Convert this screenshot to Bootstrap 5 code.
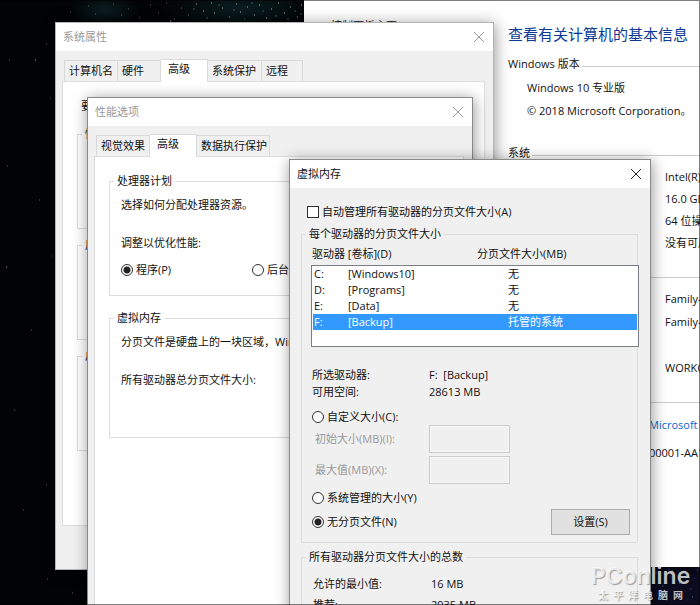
<!DOCTYPE html>
<html lang="zh-CN">
<head>
<meta charset="utf-8">
<meta name="viewport" content="width=device-width, initial-scale=1">
<title>虚拟内存</title>
<link href="https://cdn.jsdelivr.net/npm/bootstrap@5.3.0/dist/css/bootstrap.min.css" rel="stylesheet">
<style>
  body { font: 11px/16px "Open Sans", "Noto Sans CJK SC", sans-serif; color: #111; background: #000; }
  p { margin: 0; }
  .desktop { height: 100vh; background: #020304; }
  .desktop::after { content: ""; position: absolute; inset: 0; border: 1px solid rgba(0,0,0,.5); border-left: 0; pointer-events: none; z-index: 9; }
  .stars { position: absolute; inset: 0; }

  .win { position: absolute; background: #f0f0f0; border: 1px solid #8a8a8a; box-shadow: 1px 2px 14px rgba(0,0,0,.42); white-space: nowrap; }
  .win-info { left: 304px; right: 0; top: 0; background: #fff; border: 0; overflow: hidden; padding: 24px 0 106px 204px; }
  .win-props { left: 55px; top: 22px; width: 439px; padding-bottom: 43px; border-color: #b4b4b4; }
  .win-perf { left: 87px; top: 97px; width: 386px; }
  .win-vm { left: 289px; top: 159px; width: 362px; }
  .title-row { height: 28px; background: #fff; padding: 0 8px 0 7px; color: #999; }
  .win-vm .title-row { color: #111; }
  .close-x { border: 0; background: none; padding: 0; width: 12px; height: 12px; color: inherit; line-height: 0; }
  .win-vm .close-x { color: #222; }

  .tab-row { padding: 8px 8px 0; }
  .tab-btn { border: 1px solid #d9d9d9; border-bottom: 0; border-left-width: 0; background: #f0f0f0; height: 21px; padding: 0 0 0 4px; text-align: left; color: #111; }
  .tab-btn:first-child { border-left-width: 1px; }
  .tab-btn.current { background: #fff; height: 23px; padding: 0 0 4px 7px; margin-bottom: -1px; position: relative; }
  .w-41 { width: 41px; } .w-43 { width: 43px; } .w-47 { width: 47px; } .w-54 { width: 54px; } .w-73 { width: 73px; }
  .pane { background: #fff; border: 1px solid #dcdcdc; margin: 0 8px 0 6px; padding: 16px 14px 0; overflow: hidden; }
  .win-props .pane { height: 445px; }
  .win-perf .pane { min-height: 480px; }

  .group { border: 1px solid #dcdcdc; }
  .group legend { float: none; width: auto; font-size: 11px; line-height: 16px; margin: 0 0 0 4px; padding: 0 3px; }
  .win-props .group { height: 103px; margin-bottom: 8px; }
  .win-perf .group { padding-bottom: 17px; margin-bottom: 14px; }
  .group-in { padding: 8px 0 0 11px; }
  .group-in p { margin-bottom: 22px; }
  .group-in p.tight { margin-bottom: 11px; }
  .tall-in { padding-bottom: 10px; }
  .vm-in { padding: 4px 0 0 9px; }

  .tick { appearance: none; width: 12px; height: 12px; margin: 0; border: 1px solid #333; background: #fff; flex: none; }
  .tick[type=radio] { border-radius: 50%; }
  .tick[type=radio]:checked { background: radial-gradient(circle, #222 0 3px, #fff 4px); }
  .opt { gap: 3px; }
  .opt-wide { width: 131px; }

  .vm-body { padding: 16px 12px 0 11px; }
  .vm-body .group { margin-bottom: 6px; }
  .auto-opt { padding-left: 6px; margin-bottom: 6px; }
  .list-head { padding: 0 0 3px 1px; }
  .list-head span:first-child { width: 165px; }
  .drive-list { border: 1px solid #7a7f87; background: #fff; height: 82px; padding: 0 1px; margin-right: -2px; }
  .drive-list table { width: 100%; table-layout: fixed; }
  .drive-list td { padding: 0 0 0 1px; height: 16px; line-height: 16px; }
  .drive-list tr.chosen { background: #3399ff; color: #fff; }
  .col-id { width: 34px; } .col-name { width: 160px; }
  .facts { line-height: 17px; padding: 19px 0 9px 1px; }
  .facts dt { width: 117px; font-weight: 400; }
  .facts dd, .totals dd { margin: 0; }
  .totals { padding: 11px 0 24px 11px; row-gap: 5px; }
  .totals dt { width: 118px; font-weight: 400; }
  .size-row { margin-bottom: 3px; color: #999; padding-left: 4px; }
  .size-row label { width: 114px; }
  .size-box { width: 81px; height: 28px; border: 1px solid #ccc; background: #f0f0f0; box-shadow: inset 0 0 0 1px #f7f7f7; }
  .push { width: 79px; height: 26px; border: 1px solid #adadad; background: #e1e1e1; padding: 0; color: #111; margin-right: 7px; }
  .managed { margin-top: 6px; }
  .last-row { padding: 3px 0 7px; }
  .vm-in > .opt, .last-row .opt { padding-left: 1px; }

  .info-title { font-size: 15px; line-height: 20px; color: #0a3a96; margin: 0 0 12px; font-weight: 400; }
  .side-link { position: absolute; left: 27px; top: 18px; color: #111; text-decoration: none; }
  .rule-head::after { content: ""; flex: 1; height: 1px; background: #ccc; margin: 4px 0 0 2px; }
  .info-lines { display: grid; padding: 8px 0 26px; row-gap: 7px; }
  .edition { padding-left: 19px; }
  .specs { padding-left: 157px; row-gap: 6px; }
  .names { padding: 13px 0 26px 157px; }
  .names p:last-child { margin-top: 23px; }
  .license { padding: 14px 0 0 141px; row-gap: 12px; }
  .license a { color: #0a66cc; text-decoration: none; }
  .thin { height: 1px; background: #ccc; }

  .logo-mark { position: absolute; right: 9px; bottom: 4px; width: 101px; color: rgba(255,255,255,.75); text-shadow: 1px 1px 1px rgba(0,0,0,.35); z-index: 5; }
  .logo-big { font: 600 23px/26px "Inter", sans-serif; text-align: center; }
  .logo-sub { font-size: 10px; line-height: 12px; padding: 0 8px; font-weight: 700; }
</style>
<script src="https://cdn.jsdelivr.net/npm/bootstrap@5.3.0/dist/js/bootstrap.bundle.min.js"></script>
</head>
<body>
<main class="desktop position-relative overflow-hidden">
  <svg class="stars w-100 h-100" aria-hidden="true" fill="none">
    <defs><radialGradient id="haze"><stop offset="0" stop-color="#0d2a2e" stop-opacity=".7"/><stop offset="1" stop-color="#0d2a2e" stop-opacity="0"/></radialGradient></defs>
    <ellipse cx="105" cy="10" rx="36" ry="16" fill="url(#haze)"/>
    <ellipse cx="240" cy="8" rx="80" ry="20" fill="url(#haze)"/>
    <ellipse cx="675" cy="586" rx="40" ry="26" fill="#15143a" opacity=".5"/>
    <path stroke="#53615f" d="M46 44h1M9 60h1M50 98h1M7 166h1M70 12h1M88 6h1M95 14h1M113 4h1M121 15h1M128 9h1M139 18h1M150 5h1M158 13h1M166 3h1M174 19h1M181 8h1M188 15h1M52 256h1M46 485h1M47 579h1M72 593h1M23 510h1M31 330h1M14 410h1M39 200h1"/>
    <path stroke="#a9aea6" d="M170 21h1M196 4h1M203 11h1M211 3h1M214 13h1M222 8h1M229 17h1M236 4h1M240 12h1M247 7h1M254 15h1M259 5h1M266 18h1M271 9h1M278 3h1M284 13h1M290 7h1M297 17h1M301 5h1M6 267h1M35 60h1"/>
    <path stroke="#3b5750" d="M193 9h2M206 18h2M218 5h2M233 10h2M244 19h1M251 3h2M262 11h2M275 16h2M287 19h2M294 11h2M300 14h2"/>
    <path stroke="#35306a" d="M655 573h2M662 586h2M670 577h1M676 596h2M683 571h2M690 589h2M694 578h1M658 598h1M668 569h2M686 600h1"/>
    <path stroke="#3f8290" d="M660 579h1M672 571h1M679 583h1M688 576h1M692 597h1M665 594h1M697 570h1"/>
  </svg>

  <section class="win win-info" aria-label="系统">
    <a class="side-link" href="#">控制面板主页</a>
    <h1 class="info-title">查看有关计算机的基本信息</h1>
    <div class="rule-head d-flex align-items-center">Windows 版本</div>
    <div class="info-lines edition">
      <p>Windows 10 专业版</p>
      <p>© 2018 Microsoft Corporation。</p>
    </div>
    <div class="rule-head d-flex align-items-center">系统</div>
    <div class="info-lines specs">
      <p>Intel(R)</p>
      <p>16.0 GB</p>
      <p>64 位操作</p>
      <p>没有可用</p>
    </div>
    <div class="thin"></div>
    <div class="info-lines names">
      <p>Family-PC</p>
      <p>Family-PC</p>
      <p>WORKGROUP</p>
    </div>
    <div class="thin"></div>
    <div class="info-lines license pb-0">
      <a href="#">Microsoft</a>
      <p>00001-AA1</p>
    </div>
  </section>

  <section class="win win-props" aria-label="系统属性">
    <div class="title-row d-flex align-items-center justify-content-between">
      <span>系统属性</span>
      <button class="close-x" type="button" aria-label="关闭"><svg width="12" height="12" stroke="currentColor" fill="none"><path d="M1 1l10 10M11 1L1 11"/></svg></button>
    </div>
    <div class="tab-row d-flex align-items-end">
      <button type="button" class="tab-btn w-54">计算机名</button><button type="button" class="tab-btn w-43 ps-1">硬件</button><button type="button" class="tab-btn current w-47">高级</button><button type="button" class="tab-btn w-54">系统保护</button><button type="button" class="tab-btn w-41">远程</button>
    </div>
    <div class="pane">
      <p class="ps-1 pb-1 mb-2">要进行大多数更改，你必须作为管理员登录。</p>
      <fieldset class="group"><legend>性能</legend></fieldset>
      <fieldset class="group"><legend>用户配置文件</legend></fieldset>
      <fieldset class="group"><legend>启动和故障恢复</legend></fieldset>
    </div>
  </section>

  <section class="win win-perf" aria-label="性能选项">
    <div class="title-row d-flex align-items-center justify-content-between">
      <span>性能选项</span>
      <button class="close-x" type="button" aria-label="关闭"><svg width="12" height="12" stroke="currentColor" fill="none"><path d="M1 1l10 10M11 1L1 11"/></svg></button>
    </div>
    <div class="tab-row d-flex align-items-end">
      <button type="button" class="tab-btn w-54">视觉效果</button><button type="button" class="tab-btn current w-47">高级</button><button type="button" class="tab-btn w-73">数据执行保护</button>
    </div>
    <div class="pane">
      <fieldset class="group">
        <legend>处理器计划</legend>
        <div class="group-in">
          <p>选择如何分配处理器资源。</p>
          <p class="tight">调整以优化性能:</p>
          <div class="d-flex">
            <label class="opt opt-wide d-flex align-items-center"><input class="tick" type="radio" name="sched" checked>程序(P)</label>
            <label class="opt d-flex align-items-center"><input class="tick" type="radio" name="sched">后台服务(S)</label>
          </div>
        </div>
      </fieldset>
      <fieldset class="group">
        <legend>虚拟内存</legend>
        <div class="group-in tall-in">
          <p>分页文件是硬盘上的一块区域，Windows</p>
          <p>所有驱动器总分页文件大小:</p>
        </div>
      </fieldset>
    </div>
  </section>

  <section class="win win-vm" aria-label="虚拟内存">
    <div class="title-row d-flex align-items-center justify-content-between">
      <span>虚拟内存</span>
      <button class="close-x" type="button" aria-label="关闭"><svg width="12" height="12" stroke="currentColor" fill="none"><path d="M1 1l10 10M11 1L1 11"/></svg></button>
    </div>
    <div class="vm-body">
      <label class="opt auto-opt d-flex align-items-center"><input class="tick" type="checkbox">自动管理所有驱动器的分页文件大小(A)</label>
      <fieldset class="group">
        <legend>每个驱动器的分页文件大小</legend>
        <div class="vm-in">
          <div class="list-head d-flex"><span>驱动器 [卷标](D)</span><span>分页文件大小(MB)</span></div>
          <div class="drive-list">
            <table>
              <colgroup><col class="col-id"><col class="col-name"><col></colgroup>
              <tbody>
                <tr><td>C:</td><td>[Windows10]</td><td>无</td></tr>
                <tr><td>D:</td><td>[Programs]</td><td>无</td></tr>
                <tr><td>E:</td><td>[Data]</td><td>无</td></tr>
                <tr class="chosen"><td>F:</td><td>[Backup]</td><td>托管的系统</td></tr>
              </tbody>
            </table>
          </div>
          <dl class="facts m-0">
            <div class="d-flex"><dt>所选驱动器:</dt><dd>F:&nbsp; [Backup]</dd></div>
            <div class="d-flex"><dt>可用空间:</dt><dd>28613 MB</dd></div>
          </dl>
          <label class="opt d-flex align-items-center"><input class="tick" type="radio" name="size">自定义大小(C):</label>
          <div class="size-row d-flex align-items-center"><label for="minSize">初始大小(MB)(I):</label><input id="minSize" class="size-box" type="text" disabled></div>
          <div class="size-row d-flex align-items-center"><label for="maxSize">最大值(MB)(X):</label><input id="maxSize" class="size-box" type="text" disabled></div>
          <label class="opt managed d-flex align-items-center"><input class="tick" type="radio" name="size">系统管理的大小(Y)</label>
          <div class="d-flex align-items-center justify-content-between last-row">
            <label class="opt d-flex align-items-center"><input class="tick" type="radio" name="size" checked>无分页文件(N)</label>
            <button type="button" class="push">设置(S)</button>
          </div>
        </div>
      </fieldset>
      <fieldset class="group">
        <legend>所有驱动器分页文件大小的总数</legend>
        <dl class="totals m-0 d-grid">
          <div class="d-flex"><dt>允许的最小值:</dt><dd>16 MB</dd></div>
          <div class="d-flex"><dt>推荐:</dt><dd>2935 MB</dd></div>
        </dl>
      </fieldset>
    </div>
  </section>

  <div class="logo-mark">
    <div class="logo-big">PConline</div>
    <div class="logo-sub d-flex justify-content-between"><span>太</span><span>平</span><span>洋</span><span>电</span><span>脑</span><span>网</span></div>
  </div>
</main>
</body>
</html>
